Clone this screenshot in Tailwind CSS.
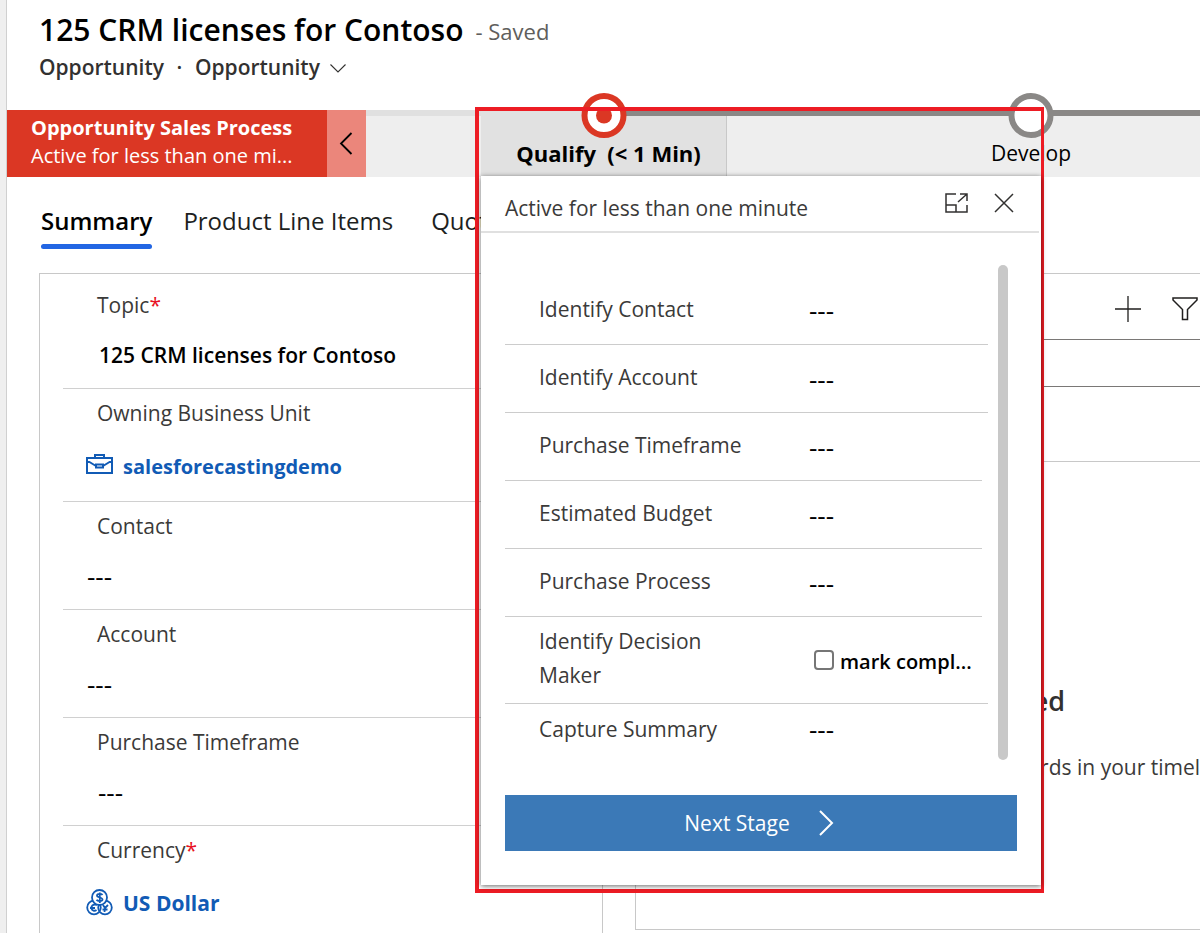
<!DOCTYPE html>
<html lang="en">
<head>
<meta charset="utf-8">
<title>125 CRM licenses for Contoso</title>
<script src="https://cdn.jsdelivr.net/npm/@tailwindcss/browser@4"></script>
</head>
<body class="h-screen overflow-hidden bg-white font-['Open_Sans','Noto_Sans',sans-serif] text-[21px] text-[#3b3a39]">
<div class="flex h-full">
  <div class="w-[7px] shrink-0 border-r border-[#d0d0d0] bg-[#efefef]"></div>
  <main class="relative flex min-w-0 grow flex-col overflow-hidden">
    <header class="h-[110px] shrink-0 pt-1.5 pl-8">
      <div class="flex h-[46px] items-center gap-3">
        <h1 class="text-[30px] font-semibold text-black">125 CRM licenses for Contoso</h1>
        <span class="pt-1 text-[22px] text-[#605e5c]">- Saved</span>
      </div>
      <div class="flex h-8 items-center font-semibold text-[#323130]">
        <span>Opportunity</span>
        <span class="w-[31px] text-center">·</span>
        <button class="flex items-center gap-2.5">Opportunity
          <svg class="h-4 w-4" viewBox="0 0 16 16" fill="none" stroke="#323130" stroke-width="1.100"><path d="M.5 4.500 8 12l7.500-7.500"/></svg>
        </button>
      </div>
    </header>

    <section class="flex h-[67px] shrink-0 bg-[#eeeeee]" aria-label="Opportunity Sales Process">
      <div class="flex w-[320px] shrink-0 flex-col justify-center bg-[#db3724] pb-1 pl-6 text-[20px] text-white">
        <strong class="leading-7 font-bold">Opportunity Sales Process</strong>
        <span class="leading-7">Active for less than one mi...</span>
      </div>
      <button class="flex w-[39px] shrink-0 items-center justify-center bg-[#eb867b]" aria-label="Collapse process">
        <svg class="h-6 w-4" viewBox="0 0 16 24" fill="none" stroke="#000" stroke-width="1.800"><path d="M12.500 1 2 11.500 12.500 22"/></svg>
      </button>
      <div class="w-[115px] shrink-0 border-t-6 border-[#e0e0e0]"></div>
      <button class="relative w-[246px] shrink-0 border-r border-b border-[#c8c8c8] bg-[#e1e1e1] pt-5 pl-2.5 text-center text-[22px] font-bold text-black">
        <span class="absolute top-0 -right-px h-1.5 w-1/2 bg-[#8a8886]"></span>
        <svg class="absolute -top-[17px] left-[100px] h-[46px] w-[46px]" viewBox="0 0 46 46"><circle cx="23" cy="22.500" r="19.500" fill="#fff" stroke="#db3724" stroke-width="6"/><circle cx="23" cy="22.500" r="8" fill="#db3724"/></svg>
        Qualify&nbsp; (&lt; 1 Min)
      </button>
      <button class="relative w-[608px] shrink-0 pt-5 text-center text-black">
        <span class="absolute inset-x-0 top-0 h-1.5 bg-[#8a8886]"></span>
        <svg class="absolute -top-[17px] left-[281px] h-[46px] w-[46px]" viewBox="0 0 46 46"><circle cx="23" cy="22.500" r="19.500" fill="#fff" stroke="#8a8886" stroke-width="6"/></svg>
        Develop
      </button>
    </section>

    <nav class="flex h-[96px] shrink-0 pt-6 pl-[34px] text-[24px] whitespace-nowrap text-[#201f1e]">
      <a href="#summary" class="flex h-12 flex-col justify-between leading-10 font-semibold text-black">Summary<span class="h-[5px] rounded-full bg-[#2266e3]"></span></a>
      <a href="#products" class="ml-[31px] h-12 leading-10">Product Line Items</a>
      <a href="#quotes" class="ml-[38px] h-12 leading-10">Quotes</a>
    </nav>

    <div class="flex min-h-0 grow gap-8 pl-8">
      <section class="w-[564px] shrink-0 border border-b-0 border-[#c8c8c8] pt-[7px] pl-[23px]">
        <div class="border-b border-[#d0d0d0] pt-2">
          <div class="h-8 pl-[34px] leading-8">Topic<span class="text-[#e81123]">*</span></div>
          <div class="flex h-[67px] items-center pt-0.5 pl-9 font-semibold text-black">125 CRM licenses for Contoso</div>
        </div>
        <div class="border-b border-[#d0d0d0] pt-2">
          <div class="h-8 pl-[34px] leading-8">Owning Business Unit</div>
          <a href="#unit" class="flex h-18 items-center gap-2.5 pl-[23px] text-[20px] font-bold text-[#115bb5]">
            <svg class="h-6 w-[27px]" viewBox="0 0 27 24" fill="none" stroke="#115bb5" stroke-width="2"><path d="M1 5h25v15H1zM9 5V2h9v3M1 7.500l9 5.500M26 7.500l-9 5.500M10 11.500h7v3h-7z"/></svg>
            <span class="pt-1">salesforecastingdemo</span>
          </a>
        </div>
        <div class="border-b border-[#d0d0d0] pt-2">
          <div class="h-8 pl-[34px] leading-8">Contact</div>
          <div class="flex h-[67px] items-center pt-0.5 pl-6 text-[26px] text-black">---</div>
        </div>
        <div class="border-b border-[#d0d0d0] pt-2">
          <div class="h-8 pl-[34px] leading-8">Account</div>
          <div class="flex h-[67px] items-center pt-0.5 pl-6 text-[26px] text-black">---</div>
        </div>
        <div class="border-b border-[#d0d0d0] pt-2">
          <div class="h-8 pl-[34px] leading-8">Purchase Timeframe</div>
          <div class="flex h-[67px] items-center pt-0.5 pl-[35px] text-[26px] text-black">---</div>
        </div>
        <div class="pt-2">
          <div class="h-8 pl-[34px] leading-8">Currency<span class="text-[#e81123]">*</span></div>
          <a href="#currency" class="flex h-18 items-center gap-2.5 pl-[23px] font-bold text-[#115bb5]">
            <svg class="h-7 w-[27px]" viewBox="0 0 27 28" fill="none" stroke="#115bb5" stroke-width="1.800"><circle cx="8" cy="19.500" r="6.800"/><circle cx="19" cy="19.500" r="6.800"/><circle cx="13.500" cy="9.500" r="7.500" fill="#fff"/><path d="M16.500 7c-1-1.500-5.500-1.500-5.500.5 0 2.500 5.500 1.500 5.500 4 0 2-5 2-6 .3M13.800 4.500v10.500M11 17c-4-1.500-6 1-5.500 3.500.5 2 3 3 5 1.500M4 20h5M17 17l2 3 3-3M19 20l-.5 4M16.500 21.500h5"/></svg>
            <span class="pt-1">US Dollar</span>
          </a>
        </div>
      </section>

      <section class="mb-[3px] w-[640px] shrink-0 border border-[#c8c8c8]">
        <div class="flex h-[65px] items-center gap-[29px] pt-1 pl-[478px]">
          <button aria-label="Add record"><svg class="h-7 w-7" viewBox="0 0 28 28" fill="none" stroke="#201f1e" stroke-width="1.300"><path d="M14 1v26M1 14h26"/></svg></button>
          <button aria-label="Filter"><svg class="h-7 w-7" viewBox="0 0 28 28" fill="none" stroke="#201f1e" stroke-width="1.500"><path d="M2 3h24v2L16.500 14.500V24.500h-5V14.500L2 5z"/></svg></button>
        </div>
        <div class="h-12 border-y border-[#7a7876]"></div>
        <div class="h-[75px] border-b border-[#c8c8c8]"></div>
        <h2 class="mt-[216px] w-[429px] text-right text-[27px] leading-[46px] font-semibold whitespace-nowrap text-[#323130]">Get started</h2>
        <p class="mt-6 flex w-[594px] justify-end leading-[38px] whitespace-nowrap text-[#3b3a39]">records in your timeline</p>
      </section>
    </div>

    <div class="absolute top-[107px] left-[468px] w-[569px] border-4 border-r-3 border-[#ed1c24] pt-[65px] pb-1 pl-0.5">
      <div class="bg-white shadow-[0_1px_5px_rgba(0,0,0,0.6)]" role="dialog" aria-label="Qualify stage">
        <div class="mr-0.5 flex h-[57px] items-center gap-6 border-b-2 border-[#e0e0e0] pr-[23px] pb-0.5 pl-6">
          <span class="grow pt-3">Active for less than one minute</span>
          <button aria-label="Dock"><svg class="h-6 w-6" viewBox="0 0 24 24" fill="none" stroke="#323130" stroke-width="1.500"><path d="M12 3H2v18h21v-7M2 14h10v7M14 11l9-8M16 3h7v7"/></svg></button>
          <button aria-label="Close"><svg class="h-6 w-6" viewBox="0 0 24 24" fill="none" stroke="#323130" stroke-width="1.500"><path d="M3 3l18 18M21 3 3 21"/></svg></button>
        </div>
        <div class="flex pt-8 pr-[33px] pl-6">
          <div class="grow">
            <div class="flex h-20 items-center border-b border-[#cccccc] pt-2.5 pl-[34px]"><span class="w-[270px]">Identify Contact</span><span class="pt-0.5 text-[26px] text-black">---</span></div>
            <div class="flex h-17 items-center border-b border-[#cccccc] pl-[34px]"><span class="w-[270px] pb-0.5">Identify Account</span><span class="pt-0.5 text-[26px] text-black">---</span></div>
            <div class="mr-1.5 flex h-17 items-center border-b border-[#cccccc] pl-[34px]"><span class="w-[270px] pb-0.5">Purchase Timeframe</span><span class="pt-0.5 text-[26px] text-black">---</span></div>
            <div class="mr-1.5 flex h-17 items-center border-b border-[#cccccc] pl-[34px]"><span class="w-[270px] pb-0.5">Estimated Budget</span><span class="pt-0.5 text-[26px] text-black">---</span></div>
            <div class="mr-1.5 flex h-17 items-center border-b border-[#cccccc] pl-[34px]"><span class="w-[270px] pb-0.5">Purchase Process</span><span class="pt-0.5 text-[26px] text-black">---</span></div>
            <div class="flex h-[87px] items-center border-b border-[#cccccc] pl-[34px]">
              <span class="w-[275px] pr-20 pb-1 leading-[34px]">Identify Decision Maker</span>
              <label class="flex items-center gap-1.5 text-[20px] font-semibold text-black"><input type="checkbox" class="h-5 w-5 appearance-none rounded-[4px] border-2 border-[#767676] bg-white"><span class="pt-1">mark compl...</span></label>
            </div>
            <div class="flex h-[52px] items-center pl-[34px]"><span class="w-[270px]">Capture Summary</span><span class="pb-0.5 text-[26px] text-black">---</span></div>
          </div>
          <div class="ml-2.5 h-[495px] w-2.5 shrink-0 rounded-full bg-[#c8c8c8]"></div>
        </div>
        <div class="px-6 pt-[35px] pb-[34px]">
          <button class="flex h-14 w-full items-center justify-center gap-7 bg-[#3b79b7] pr-1 text-white"><span class="pt-0.5">Next Stage</span>
            <svg class="h-7 w-4" viewBox="0 0 16 28" fill="none" stroke="#fff" stroke-width="2"><path d="M2 2l12 12L2 26"/></svg>
          </button>
        </div>
      </div>
    </div>
  </main>
</div>
</body>
</html>
